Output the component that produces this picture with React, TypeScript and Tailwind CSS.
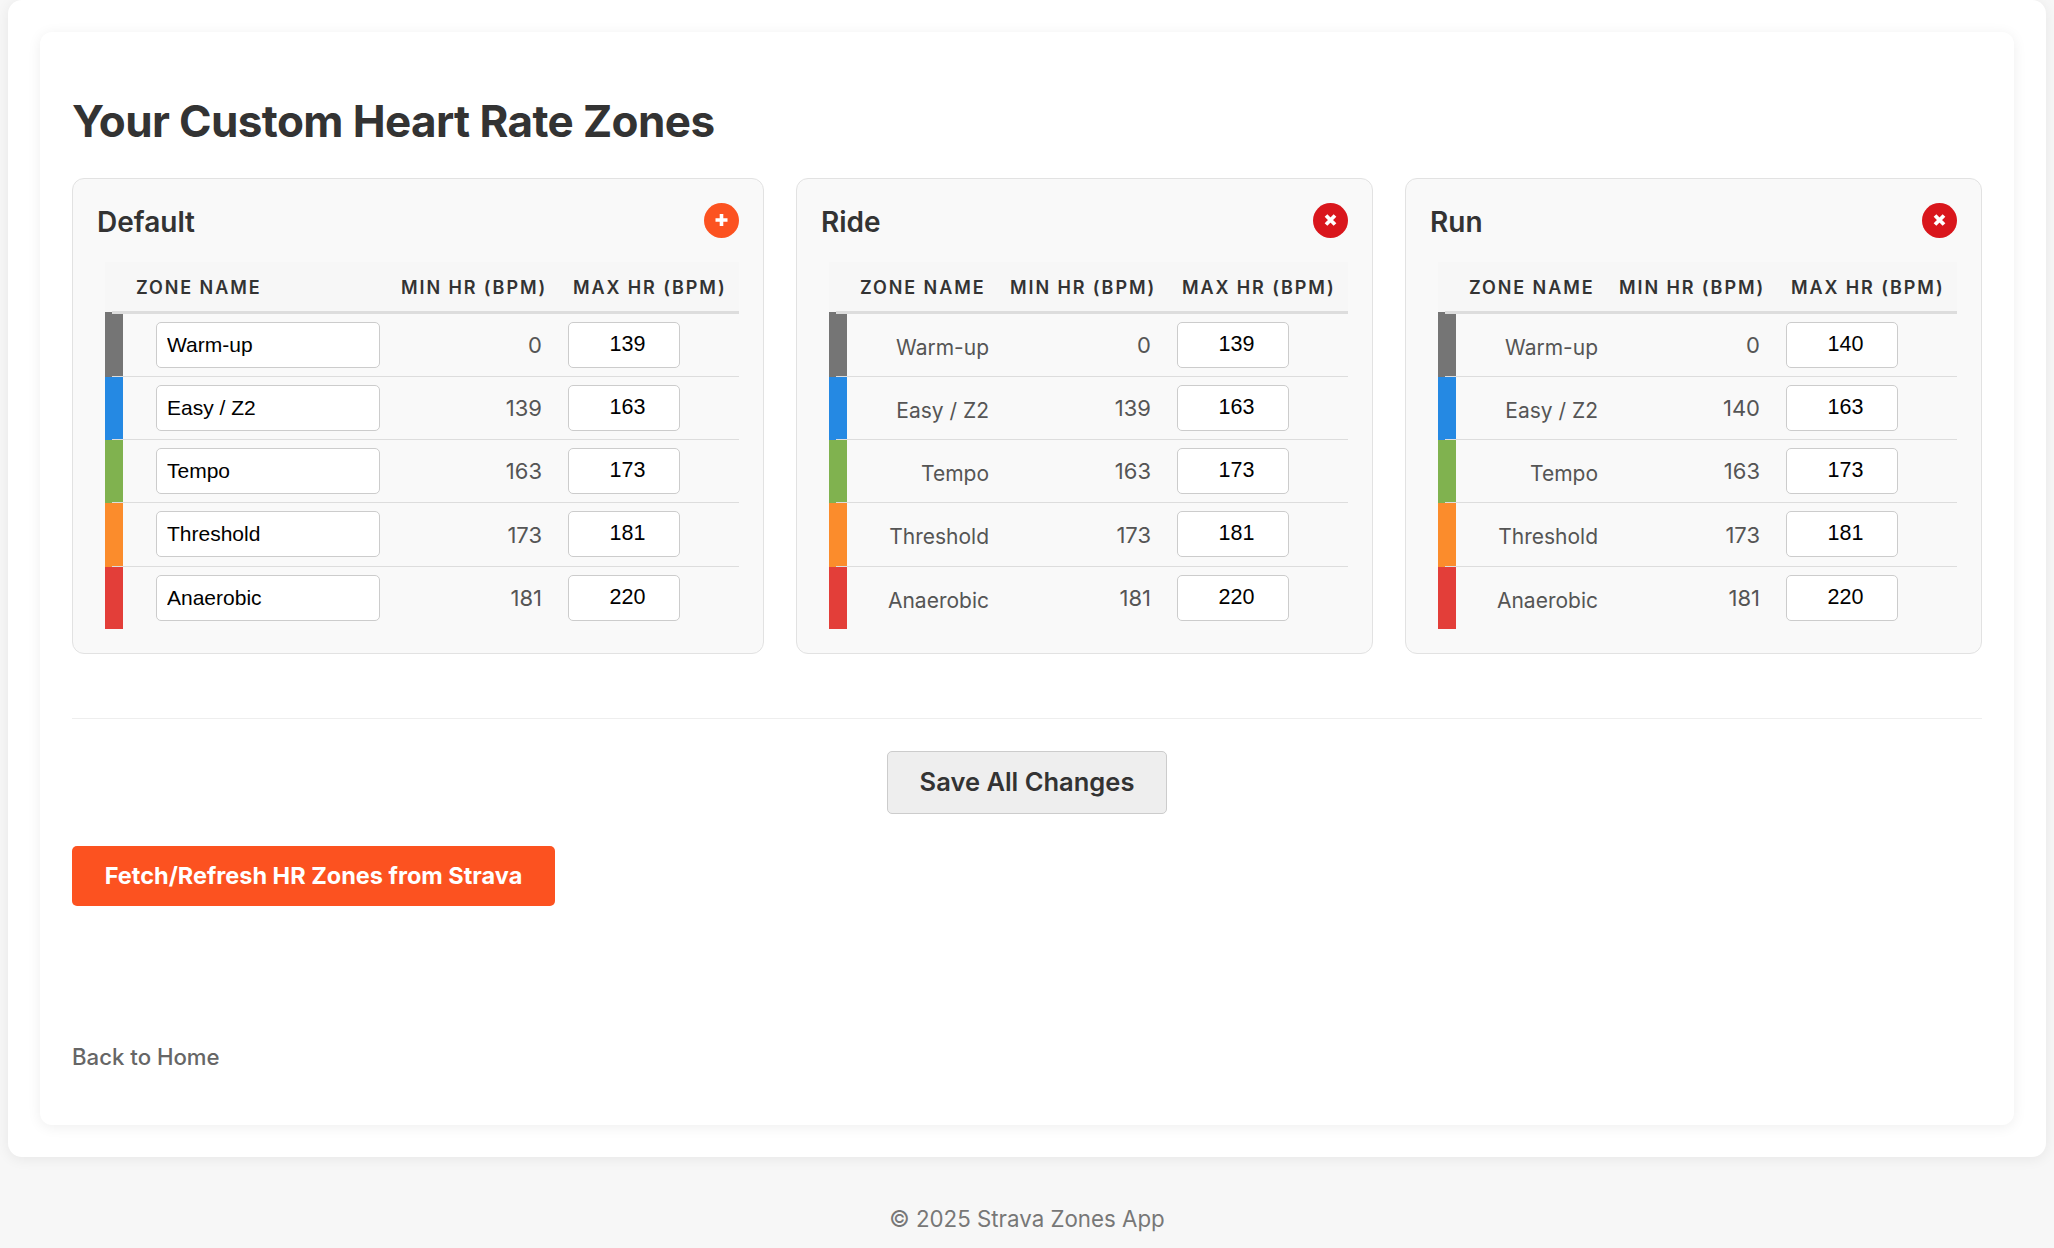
import React from 'react';

type Row = {
  name: string;
  min: string;
  max: string;
  bar: string;
  pad: string;
  last?: boolean;
};

const makeRows = (firstMax: string): Row[] => [
  { name: 'Warm-up', min: '0', max: firstMax, bar: 'bg-[#757575]', pad: 'pt-[8px] pb-[8px]' },
  { name: 'Easy / Z2', min: firstMax, max: '163', bar: 'bg-[#2589e3]', pad: 'pt-[8px] pb-[8px]' },
  { name: 'Tempo', min: '163', max: '173', bar: 'bg-[#80b24f]', pad: 'pt-[8px] pb-[8px]' },
  { name: 'Threshold', min: '173', max: '181', bar: 'bg-[#fb8c2c]', pad: 'pt-[8px] pb-[9px]' },
  { name: 'Anaerobic', min: '181', max: '220', bar: 'bg-[#e33e39]', pad: 'pt-[8px] pb-[8px]', last: true },
];

const cellBorder = (last?: boolean) => (last ? '' : 'border-b border-[#ddd]');

const ZoneTable: React.FC<{ rows: Row[]; editable: boolean }> = ({ rows, editable }) => (
  <div className="pl-2">
    <table className="w-full table-fixed border-separate border-spacing-0 font-['Inter',sans-serif]">
      <colgroup>
        <col className="w-[18px]" />
        <col />
        <col className="w-[171px]" />
        <col className="w-[180px]" />
      </colgroup>
      <thead>
        <tr className="bg-[#f7f7f7]">
          <th className="relative h-[52px] p-0">
            {/* the stripe and the header rule overlap here */}
            <div className="absolute bottom-0 left-0 h-[2px] w-[7px] bg-[#757575]" />
            <div className="absolute bottom-0 left-[7px] right-0 h-[3px] bg-[#ddd]" />
          </th>
          {['Zone Name', 'Min HR (BPM)', 'Max HR (BPM)'].map((label) => (
            <th
              key={label}
              className="border-b-[3px] border-[#ddd] pl-[13px] last:pl-[14px] pr-0 pt-[2px] text-left text-[18px] font-semibold uppercase tracking-[1.9px] whitespace-nowrap text-[#333]"
            >
              {label}
            </th>
          ))}
        </tr>
      </thead>
      <tbody>
        {rows.map((row) => (
          <tr key={row.name}>
            <td className={`relative p-0 ${row.bar}`}>
              {!row.last && <div className="absolute bottom-0 left-[7px] right-0 h-px bg-[#ddd]" />}
            </td>
            <td className={`p-0 ${cellBorder(row.last)}`}>
              {editable ? (
                <div className={`pl-[33px] pr-2 ${row.pad}`}>
                  <input
                    type="text"
                    defaultValue={row.name}
                    className="block h-[46px] w-full rounded-[5px] border border-[#ccc] bg-white pl-[10px] pb-[1px] font-['Liberation_Sans',sans-serif] text-[21px] text-black outline-none"
                  />
                </div>
              ) : (
                <div className="pr-2 pt-[5px] text-right text-[21px] text-[#555]">{row.name}</div>
              )}
            </td>
            <td className={`pr-[17px] pt-[1px] text-right text-[22px] text-[#555] ${cellBorder(row.last)}`}>{row.min}</td>
            <td className={`p-0 ${cellBorder(row.last)}`}>
              <div className={`pl-[9px] ${row.pad}`}>
                <input
                  type="text"
                  defaultValue={row.max}
                  className="block h-[46px] w-[112px] rounded-[5px] border border-[#ccc] bg-white pl-[7px] pb-[1px] text-center font-['Liberation_Sans',sans-serif] text-[21.5px] text-black outline-none"
                />
              </div>
            </td>
          </tr>
        ))}
      </tbody>
    </table>
  </div>
);

const PlusIcon = () => (
  <svg width="35" height="35" viewBox="0 0 35 35" className="block">
    <circle cx="17.5" cy="17.5" r="17.5" fill="#fc5220" />
    <path d="M17.5 11v12M11.5 17h12" stroke="#fff" strokeWidth="3.6" />
  </svg>
);

const CloseIcon = () => (
  <svg width="35" height="35" viewBox="0 0 35 35" className="block">
    <circle cx="17.5" cy="17.5" r="17.5" fill="#d9161c" />
    <path d="M13 12.5l9 9M22 12.5l-9 9" stroke="#fff" strokeWidth="3.8" />
  </svg>
);

const ZoneCard: React.FC<{ title: string; rows: Row[]; editable?: boolean; className: string }> = ({
  title,
  rows,
  editable = false,
  className,
}) => (
  <div className={`h-[476px] rounded-[12px] border border-[#e2e2e2] bg-[#f9f9f9] px-6 pt-6 ${className}`}>
    <div className="flex h-[59px] items-start justify-between">
      <h3 className="font-['Inter',sans-serif] text-[28px] leading-[38px] font-semibold text-[#333]">{title}</h3>
      <button type="button">{editable ? <PlusIcon /> : <CloseIcon />}</button>
    </div>
    <ZoneTable rows={rows} editable={editable} />
  </div>
);

const App: React.FC = () => {
  return (
    <div className="h-[1248px] overflow-hidden bg-[#f7f7f7] font-['Inter',sans-serif]">
      <div className="mx-2 rounded-[14px] bg-white p-8 shadow-[0_2px_14px_rgba(0,0,0,0.07)]">
        <div className="h-[1093px] rounded-[12px] bg-white px-8 pt-[65px] shadow-[0_2px_14px_rgba(0,0,0,0.07)]">
          <h1 className="mb-[33px] text-[44px] leading-[48px] font-bold tracking-[-0.6px] text-[#333]">
            Your Custom Heart Rate Zones
          </h1>
          <div className="flex gap-8">
            <ZoneCard title="Default" rows={makeRows('139')} editable className="w-[692px]" />
            <ZoneCard title="Ride" rows={makeRows('139')} className="w-[577px]" />
            <ZoneCard title="Run" rows={makeRows('140')} className="w-[577px]" />
          </div>
          <hr className="mt-16 border-[#eee]" />
          <div className="mt-8 flex justify-center">
            <button
              type="button"
              className="h-[63px] w-[280px] rounded-[5px] border border-[#ccc] bg-[#eee] text-[25.5px] font-semibold text-[#333]"
            >
              Save All Changes
            </button>
          </div>
          <button
            type="button"
            className="mt-8 block h-[60px] w-[483px] rounded-[5px] bg-[#fc5220] text-[23.5px] font-bold text-white"
          >
            Fetch/Refresh HR Zones from Strava
          </button>
          <a href="#" className="mt-[136px] block text-[22.2px] leading-[30px] font-medium text-[#666]">
            Back to Home
          </a>
        </div>
      </div>
      <footer className="pt-[47px] text-center text-[22.3px] leading-[30px] text-[#777]">© 2025 Strava Zones App</footer>
    </div>
  );
};

export default App;
